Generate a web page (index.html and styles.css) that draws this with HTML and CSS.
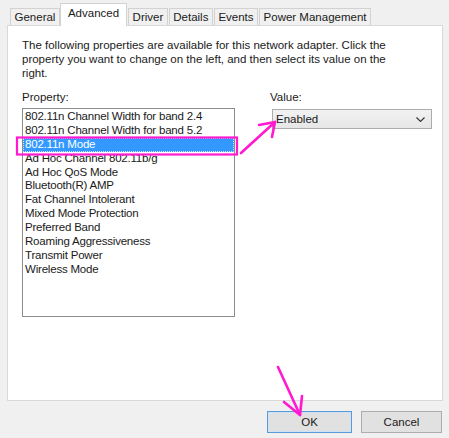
FILE: index.html
```html
<!DOCTYPE html>
<html>
<head>
<meta charset="utf-8">
<link rel="stylesheet" href="styles.css">
</head>
<body>
<div class="dialog">
  <div class="tabs">
    <div class="tab">General</div>
    <div class="tab active">Advanced</div>
    <div class="tab">Driver</div>
    <div class="tab">Details</div>
    <div class="tab">Events</div>
    <div class="tab">Power Management</div>
  </div>
  <div class="panel">
    <p class="intro">The following properties are available for this network adapter. Click the property you want to change on the left, and then select its value on the right.</p>
    <div class="fields">
      <div class="col">
        <div class="label">Property:</div>
        <div class="listbox">
          <div class="item">802.11n Channel Width for band 2.4</div>
          <div class="item">802.11n Channel Width for band 5.2</div>
          <div class="item selected">802.11n Mode</div>
          <div class="item">Ad Hoc Channel 802.11b/g</div>
          <div class="item">Ad Hoc QoS Mode</div>
          <div class="item">Bluetooth(R) AMP</div>
          <div class="item">Fat Channel Intolerant</div>
          <div class="item">Mixed Mode Protection</div>
          <div class="item">Preferred Band</div>
          <div class="item">Roaming Aggressiveness</div>
          <div class="item">Transmit Power</div>
          <div class="item">Wireless Mode</div>
        </div>
      </div>
      <div class="col value-col">
        <div class="label">Value:</div>
        <div class="select">
          <span>Enabled</span>
          <svg class="chev" width="9" height="5" viewBox="0 0 9 5"><path d="M0.5 0.5 L4.5 4.5 L8.5 0.5" fill="none" stroke="#333" stroke-width="1.1"/></svg>
        </div>
      </div>
    </div>
  </div>
  <div class="buttons">
    <div class="btn default">OK</div>
    <div class="btn">Cancel</div>
  </div>
</div>
<svg class="annot" width="449" height="438" viewBox="0 0 449 438">
  <rect x="17" y="137.5" width="220" height="17" fill="none" stroke="#ff1ad0" stroke-width="2.2"/>
  <g fill="none" stroke="#ff1ad0" stroke-width="2.6" stroke-linecap="round" stroke-linejoin="round">
    <path d="M241 153 L275 122"/>
    <path d="M259 125 L275 122 L272 137"/>
    <path d="M278 367 L300 415"/>
    <path d="M284 402 L300 415 L302 396"/>
  </g>
</svg>
</body>
</html>
```

FILE: styles.css
```css
html, body {
  margin: 0;
  padding: 0;
}
body {
  width: 449px;
  height: 438px;
  background: #f0f0f0;
  font-family: "Liberation Sans", Arial, sans-serif;
  font-size: 11.5px;
  color: #1a1a1a;
  position: relative;
  overflow: hidden;
}
.dialog {
  padding: 4px 6px 0 7px;
}
.tabs {
  display: flex;
  align-items: flex-end;
  height: 21px;
  padding-left: 3px;
  position: relative;
  z-index: 1;
}
.tab {
  height: 16px;
  line-height: 16px;
  padding: 0 3.5px;
  border: 1px solid #d2d2d2;
  border-bottom: none;
  background: #f0f0f0;
  margin-right: 1px;
  white-space: nowrap;
}
.tab.active {
  height: 21px;
  line-height: 19px;
  background: #fff;
  margin: 0 -1px -1px -1px;
  padding: 0 7px 1px 7px;
  position: relative;
}
.tab.active + .tab {
  margin-left: 2px;
}
.panel {
  height: 376px;
  border: 1px solid #d9d9d9;
  background: #fff;
  padding: 12px 14px 0 14px;
  box-sizing: border-box;
}
.intro {
  margin: 0;
  line-height: 14px;
  width: 380px;
}
.fields {
  display: grid;
  grid-template-columns: 213px 162px;
  column-gap: 35px;
  margin-top: 10px;
}
.label {
  line-height: 14px;
  height: 14px;
}
.listbox {
  margin-top: 4px;
  height: 209px;
  border: 1px solid #8c8c8c;
  box-sizing: border-box;
  padding-top: 1px;
  background: #fff;
}
.item {
  height: 13.9px;
  line-height: 13.9px;
  padding-left: 2px;
  white-space: nowrap;
  letter-spacing: -0.2px;
}
.item.selected {
  background: #3399ff;
  color: #fff;
  outline: 1px dotted #cfe6ff;
  outline-offset: -1px;
}
.select {
  margin-top: 5px;
  margin-left: 2px;
  width: 160px;
  height: 20px;
  border: 1px solid #acacac;
  box-sizing: border-box;
  background: linear-gradient(#f2f2f2, #e6e6e6);
  display: flex;
  align-items: center;
  justify-content: space-between;
  padding: 0 6px 0 3px;
}
.chev {
  display: block;
}
.buttons {
  display: flex;
  justify-content: flex-end;
  gap: 9px;
  margin-top: 10px;
  padding-right: 1px;
}
.btn {
  height: 22px;
  box-sizing: border-box;
  border: 1px solid #adadad;
  background: #e1e1e1;
  text-align: center;
  line-height: 20px;
  width: 81px;
}
.btn.default {
  width: 85px;
  border: 1px solid #5a9bd8;
  box-shadow: inset 0 0 0 1px #cfe2f5;
}
.annot {
  position: absolute;
  left: 0;
  top: 0;
  pointer-events: none;
}
```
